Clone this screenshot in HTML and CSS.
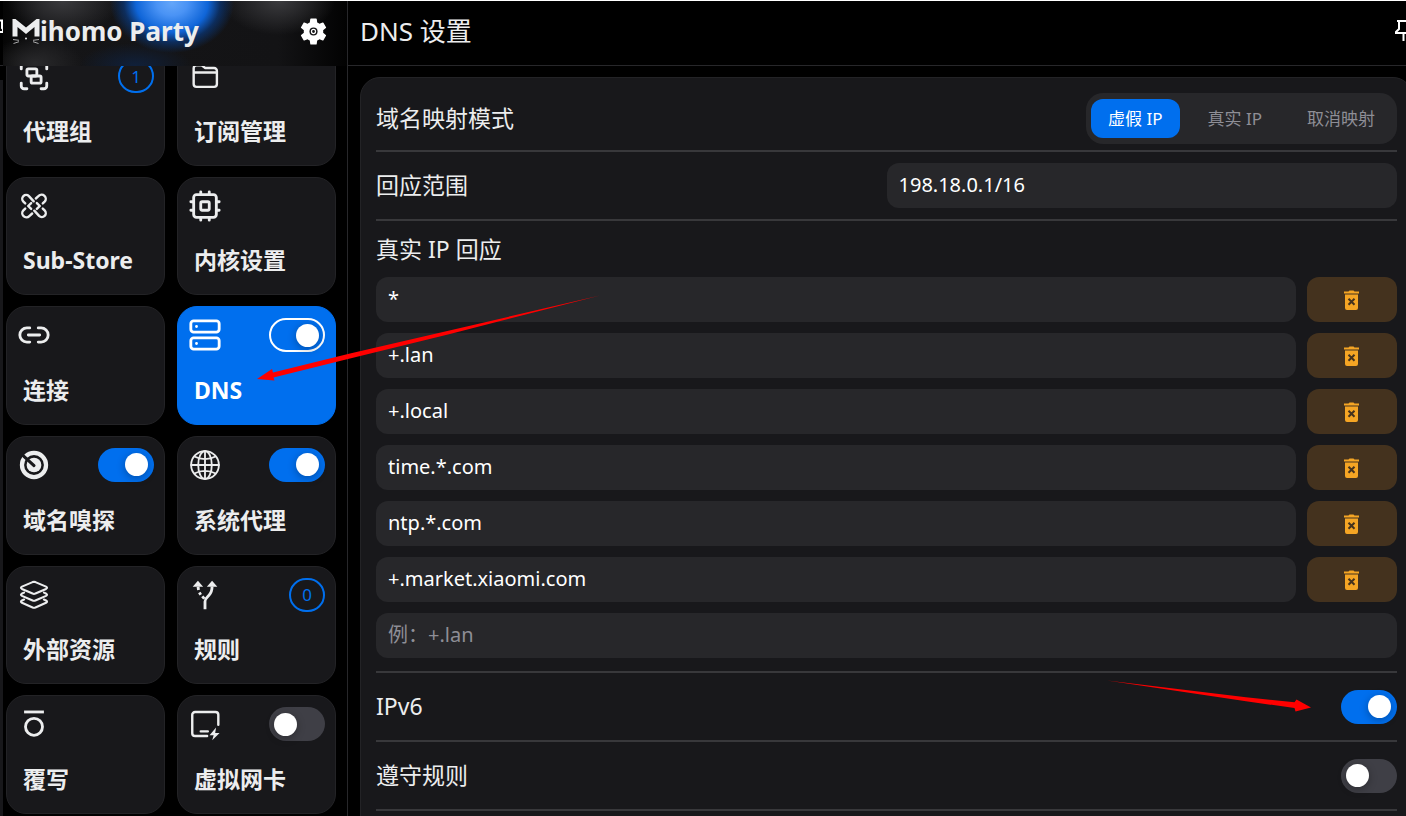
FILE: index.html
```
<!DOCTYPE html>
<html lang="zh-CN">
<head>
<meta charset="utf-8">
<title>Mihomo Party</title>
<link rel="stylesheet" href="styles.css">
</head>
<body>
<div class="app">
  <div class="edge" aria-hidden="true">
    <div class="edge-bar"><svg class="edge-pin" viewBox="0 0 3 15"><path d="M0 1.500h2v7.500l1 1v3H0" fill="none" stroke="currentColor" stroke-width="2"/></svg></div>
    <div class="edge-panel"></div>
  </div>

  <aside class="sidebar">
    <header class="brand">
      <h1 class="brand-name">
        <svg class="logo" viewBox="0 0 28 27" role="img" aria-label="M"><path d="M.5 18.500V1h3L14 9.500 24.500 1h3v17.500h-5V9L14 16 5.500 9v9.500z" fill="currentColor"/><path d="M1 21.500l6 .8M1.500 25.500l5.500-1.800M27 21.500l-6 .8M26.500 25.500L21 23.700" stroke="currentColor" stroke-width="1" opacity=".7"/><circle cx="14" cy="20.500" r="1" fill="currentColor"/></svg>
        <span>ihomo Party</span>
      </h1>
      <button class="icon-button" type="button" aria-label="设置">
        <svg class="gear" viewBox="2 2 20 20"><path fill="currentColor" d="M19.140 12.940c.04-.3.06-.61.06-.94 0-.32-.02-.64-.07-.94l2.030-1.580a.49.49 0 0 0 .12-.61l-1.920-3.320a.488.488 0 0 0-.59-.22l-2.390.96c-.5-.38-1.030-.7-1.620-.94l-.36-2.540a.484.484 0 0 0-.48-.41h-3.840c-.24 0-.43.17-.47.41l-.36 2.540c-.59.24-1.130.57-1.620.94l-2.390-.96c-.22-.08-.47 0-.59.22L2.740 8.870c-.12.21-.08.47.12.61l2.030 1.580c-.05.3-.09.63-.09.94s.02.64.07.94l-2.030 1.580a.49.49 0 0 0-.12.61l1.920 3.320c.12.22.37.29.59.22l2.390-.96c.5.38 1.030.7 1.620.94l.36 2.540c.05.24.24.41.48.41h3.840c.24 0 .44-.17.47-.41l.36-2.540c.59-.24 1.130-.56 1.620-.94l2.390.96c.22.08.47 0 .59-.22l1.920-3.320c.12-.22.07-.47-.12-.61z"/><circle class="gear-hole" cx="12" cy="12" r="3"/><circle cx="12" cy="12" r="1.500" fill="none" stroke="currentColor" stroke-width=".9"/></svg>
      </button>
    </header>

    <nav class="tiles">
      <section class="tile">
        <div class="tile-top"><svg class="icon" viewBox="0 0 24 24"><path d="M3 7V5a2 2 0 0 1 2-2h2M17 3h2a2 2 0 0 1 2 2v2M21 17v2a2 2 0 0 1-2 2h-2M7 21H5a2 2 0 0 1-2-2v-2"/><rect x="7" y="7" width="7" height="5" rx="1"/><rect x="10" y="12" width="7" height="5" rx="1"/></svg><span class="count">1</span></div>
        <a class="tile-name" href="#proxies">代理组</a>
      </section>
      <section class="tile">
        <div class="tile-top"><svg class="icon medium" viewBox="0 0 24 24"><path d="M4 6.500a2 2 0 0 1 2-2h3.600l2.600 1.900h6.200a2 2 0 0 1 2 2v9.300a2 2 0 0 1-2 2H6a2 2 0 0 1-2-2zM4 9.500h16.400"/></svg></div>
        <a class="tile-name" href="#profiles">订阅管理</a>
      </section>
      <section class="tile">
        <div class="tile-top"><svg class="icon medium" viewBox="0 0 24 24"><path d="M11.800 8.700 8.400 5A2.700 2.700 0 0 0 4.500 8.900L5.800 10.200M13.300 6.700 15.300 4.900A2.700 2.700 0 0 1 19.500 8.900L18.200 10.200M12.200 15.300 15.600 19A2.700 2.700 0 0 0 19.500 15.100L18.200 13.800M10.700 17.300 8.700 19.100A2.700 2.700 0 0 1 4.500 15.100L5.800 13.800M10 9.900 7.900 12l2.100 2.100M14 9.900l2.100 2.100-2.100 2.100"/></svg></div>
        <a class="tile-name" href="#substore">Sub-Store</a>
      </section>
      <section class="tile">
        <div class="tile-top"><svg class="icon" viewBox="0 0 24 24"><rect x="4" y="4" width="16" height="16" rx="2"/><rect x="9" y="9" width="6" height="6" rx="1"/><path d="M9 2v2M15 2v2M9 20v2M15 20v2M2 9h2M2 15h2M20 9h2M20 15h2"/></svg></div>
        <a class="tile-name" href="#core">内核设置</a>
      </section>
      <section class="tile">
        <div class="tile-top"><svg class="icon" viewBox="0 0 24 24"><path d="M9 17H7A5 5 0 0 1 7 7h2M15 7h2a5 5 0 0 1 0 10h-2M8 12h8"/></svg></div>
        <a class="tile-name" href="#connections">连接</a>
      </section>
      <section class="tile active">
        <div class="tile-top"><svg class="icon" viewBox="0 0 24 24"><rect x="2" y="2" width="20" height="8" rx="2"/><rect x="2" y="14" width="20" height="8" rx="2"/><path d="M6 6h.01M6 18h.01"/></svg><input class="switch outlined" type="checkbox" role="switch" aria-label="DNS" checked></div>
        <a class="tile-name" href="#dns">DNS</a>
      </section>
      <section class="tile">
        <div class="tile-top"><svg class="icon" viewBox="0 0 24 24"><circle cx="12" cy="12" r="8.500" stroke-width="3"/><circle class="solid" cx="12" cy="12" r="5.200"/><path class="cut" d="M4.500 5.500 12 12.400" stroke-width="2.200"/></svg><input class="switch" type="checkbox" role="switch" aria-label="域名嗅探" checked></div>
        <a class="tile-name" href="#sniffer">域名嗅探</a>
      </section>
      <section class="tile">
        <div class="tile-top"><svg class="icon globe" viewBox="0 0 24 24"><circle cx="12" cy="12" r="9.800"/><ellipse cx="12" cy="12" rx="4.800" ry="9.800"/><path d="M12 2.200v19.600M2.200 12h19.600M4.500 6c4.500 2.400 10.500 2.400 15 0M4.500 18c4.500-2.400 10.500-2.400 15 0"/></svg><input class="switch" type="checkbox" role="switch" aria-label="系统代理" checked></div>
        <a class="tile-name" href="#sysproxy">系统代理</a>
      </section>
      <section class="tile">
        <div class="tile-top"><svg class="icon thin" viewBox="0 0 24 24"><path d="M11 2.900q1-.4 2 0l7.500 3.200q1.400.8 0 1.600L13 11q-1 .4-2 0L3.500 7.700q-1.400-.8 0-1.600zM5 10.300l-1.500.7q-1.400.8 0 1.600L11 15.900q1 .4 2 0l7.500-3.300q1.400-.8 0-1.600l-1.500-.7M5 15.200l-1.500.7q-1.400.8 0 1.600l7.500 3.300q1 .4 2 0l7.500-3.300q1.400-.8 0-1.600l-1.500-.7"/></svg></div>
        <a class="tile-name" href="#resources">外部资源</a>
      </section>
      <section class="tile">
        <div class="tile-top"><svg class="icon" viewBox="0 0 24 24"><path class="solid" d="M7 2l3.700 4.200H3.300zM17 2l3.700 4.200h-7.400z"/><path class="flat" d="M12 22v-5.500c0-1.800 1.200-2.700 2.700-4.200C16.400 10.600 17 9 17 6M7.100 6.200l.3 2.300M8 10.200l1 1.600M10.100 13l1.400 1.600"/></svg><span class="count">0</span></div>
        <a class="tile-name" href="#rules">规则</a>
      </section>
      <section class="tile">
        <div class="tile-top"><svg class="icon" viewBox="0 0 24 24"><path class="flat" d="M5 3.500h14"/><circle cx="12" cy="14" r="6"/></svg></div>
        <a class="tile-name" href="#override">覆写</a>
      </section>
      <section class="tile">
        <div class="tile-top"><svg class="icon medium" viewBox="0 0 24 24"><path d="M13.500 20.500H5a2 2 0 0 1-2-2V5.500a2 2 0 0 1 2-2h14.400a2 2 0 0 1 2 2v7M9 17.200h5"/><path class="solid" d="M19.800 14.500l-4.600 5.500h2.900l-1 3.500 5.200-5.200h-3.100z"/></svg><input class="switch" type="checkbox" role="switch" aria-label="虚拟网卡"></div>
        <a class="tile-name" href="#tun">虚拟网卡</a>
      </section>
    </nav>
  </aside>

  <main class="page">
    <header class="page-head">
      <h2 class="page-title">DNS 设置</h2>
      <button class="icon-button pin" type="button" aria-label="置顶"><svg class="pin-icon" viewBox="0 0 22 22"><path d="M3 1h16M5 1v8l-3 3v1h18v-1l-3-3V1M9.500 13v8" fill="none" stroke="currentColor" stroke-width="2"/></svg></button>
    </header>

    <form class="panel">
      <div class="row">
        <span class="label" id="mode">域名映射模式</span>
        <div class="tabs" role="tablist" aria-labelledby="mode">
          <button class="tab selected" type="button" role="tab" aria-selected="true">虚假 IP</button>
          <button class="tab" type="button" role="tab" aria-selected="false">真实 IP</button>
          <button class="tab" type="button" role="tab" aria-selected="false">取消映射</button>
        </div>
      </div>
      <div class="row">
        <label class="label" for="range">回应范围</label>
        <input class="field half" id="range" type="text" value="198.18.0.1/16">
      </div>
      <div class="group">
        <h3 class="label group-label" id="real">真实 IP 回应</h3>
        <div class="entries">
          <div class="entry"><input class="field" type="text" aria-labelledby="real" value="*"><button class="delete" type="button" aria-label="删除"><svg class="trash" viewBox="0 0 15 20"><use href="#trash"/></svg></button></div>
          <div class="entry"><input class="field" type="text" aria-labelledby="real" value="+.lan"><button class="delete" type="button" aria-label="删除"><svg class="trash" viewBox="0 0 15 20"><use href="#trash"/></svg></button></div>
          <div class="entry"><input class="field" type="text" aria-labelledby="real" value="+.local"><button class="delete" type="button" aria-label="删除"><svg class="trash" viewBox="0 0 15 20"><use href="#trash"/></svg></button></div>
          <div class="entry"><input class="field" type="text" aria-labelledby="real" value="time.*.com"><button class="delete" type="button" aria-label="删除"><svg class="trash" viewBox="0 0 15 20"><use href="#trash"/></svg></button></div>
          <div class="entry"><input class="field" type="text" aria-labelledby="real" value="ntp.*.com"><button class="delete" type="button" aria-label="删除"><svg class="trash" viewBox="0 0 15 20"><use href="#trash"/></svg></button></div>
          <div class="entry"><input class="field" type="text" aria-labelledby="real" value="+.market.xiaomi.com"><button class="delete" type="button" aria-label="删除"><svg class="trash" viewBox="0 0 15 20"><use href="#trash"/></svg></button></div>
          <div class="entry"><input class="field" type="text" aria-labelledby="real" placeholder="例：+.lan"></div>
        </div>
      </div>
      <div class="row">
        <label class="label" for="ipv6">IPv6</label>
        <input class="switch" id="ipv6" type="checkbox" role="switch" checked>
      </div>
      <div class="row">
        <label class="label" for="respect">遵守规则</label>
        <input class="switch" id="respect" type="checkbox" role="switch">
      </div>
      <div class="row"></div>
    </form>
  </main>
</div>

<svg class="defs" aria-hidden="true"><symbol id="trash" viewBox="0 0 15 20"><path fill="currentColor" d="M0 1.500h4.500L5.500.500h4l1 1H15v2H0zM1 4.500h13V18q0 2-2 2H3q-2 0-2-2z"/><path class="trash-x" d="M4.500 8.800l6 6M10.500 8.800l-6 6"/></symbol></svg>

<svg class="arrows" aria-hidden="true">
  <path d="M600 295.500 350 353.500 273 372.500 272 369 257 379 274.500 380.500 273.500 377.500 350 358.500 450 334z"/>
  <path d="M1107 680.500 1246 697.300 1294.500 702.300 1296.500 699.500 1311 707.500 1295.500 711.500 1294.500 708 1246 701.300z"/>
</svg>
</body>
</html>
```
FILE: styles.css
```
* { box-sizing: border-box; }
html, body { height: 100%; }
body {
  margin: 0;
  overflow: hidden;
  background: #000;
  color: #ecedee;
  font-family: "Noto Sans", "Noto Sans CJK SC", sans-serif;
  font-size: 23px;
}
h1, h2, h3 { margin: 0; }
button, input { font: inherit; color: inherit; }
button { border: 0; cursor: pointer; }

.app {
  display: flex;
  height: 100vh;
  border-top: 1px solid #fff;
  overflow: hidden;
}

.edge { flex: none; width: 3px; display: flex; flex-direction: column; }
.edge-bar { height: 65px; padding-top: 18px; border-bottom: 1px solid #27272a; margin-bottom: 14px; }
.edge-pin { display: block; width: 3px; height: 15px; color: #fff; }
.edge-panel { flex: 1; background: #18181b; }

/* Sidebar */
.sidebar {
  flex: none;
  width: 345px;
  display: flex;
  flex-direction: column;
  border-right: 1px solid #27272a;
}
.brand {
  position: relative;
  z-index: 1;
  flex: none;
  height: 65px;
  display: flex;
  align-items: center;
  justify-content: space-between;
  padding: 0 20px 5px 9px;
  background:
    radial-gradient(ellipse 62px 50px at 169px 2px, #64a6f9 0, #4a93f5 25%, #0f65d8 58%, rgba(8, 62, 140, .6) 78%, transparent 100%),
    radial-gradient(ellipse 56px 34px at 60px 0, #3a3a3d, transparent),
    radial-gradient(ellipse 56px 34px at 276px 0, #3a3a3d, transparent),
    radial-gradient(ellipse 48px 26px at 32px 62px, #29292b, transparent),
    radial-gradient(ellipse 56px 22px at 132px 64px, #10203a, transparent),
    linear-gradient(90deg, #050505, #151517 12%, #131315 80%, #020202);
}
.brand-name { display: flex; align-items: center; font-size: 26px; line-height: 36px; font-weight: 700; }
.logo { width: 28px; height: 27px; }
.icon-button { display: flex; padding: 0; background: none; color: #fff; }
.gear { width: 27px; height: 27px; }
.gear-hole { fill: #141416; }

.tiles {
  flex: 1;
  display: grid;
  grid-template-columns: 1fr 1fr;
  grid-template-rows: repeat(6, 1fr);
  gap: 11px 12px;
  margin-top: -19px;
  padding: 0 11px 2px 3px;
}
.tile {
  display: flex;
  flex-direction: column;
  justify-content: space-between;
  padding: 11px 10px 17px;
  border: 1px solid #232326;
  border-radius: 20px;
  background: #18181b;
}
.tile-top { display: flex; align-items: center; justify-content: space-between; height: 34px; }
.tile-name { padding: 0 6px; color: inherit; text-decoration: none; font-weight: 700; line-height: 34px; }
.tile.active { background: #006fee; border-color: #006fee; color: #fff; }

.icon {
  width: 34px;
  height: 34px;
  fill: none;
  stroke: currentColor;
  stroke-width: 2;
  stroke-linecap: round;
  stroke-linejoin: round;
}
.icon.medium { stroke-width: 1.7; }
.icon.thin { stroke-width: 1.5; }
.icon.globe { stroke-width: 1.3; }
.icon .solid { fill: currentColor; stroke: none; }
.icon .cut { stroke: #18181b; }
.icon .flat { stroke-linecap: butt; }

.count {
  display: flex;
  align-items: center;
  justify-content: center;
  width: 36px;
  height: 34px;
  border: 2px solid #006fee;
  border-radius: 18px;
  color: #006fee;
  font-size: 17px;
}

.switch {
  appearance: none;
  flex: none;
  display: flex;
  align-items: center;
  width: 56px;
  height: 34px;
  margin: 0;
  padding: 0 6px 0 5px;
  border-radius: 17px;
  background: #3f3f46;
}
.switch::before {
  content: "";
  width: 23px;
  height: 23px;
  border-radius: 50%;
  background: #fff;
  box-shadow: 0 2px 8px rgba(0, 0, 0, .3);
}
.switch:checked { justify-content: flex-end; background: #006fee; }
.switch.outlined { border: 2px solid #fff; padding: 0 4px; }

/* Page */
.page { flex: 1; min-width: 0; display: flex; flex-direction: column; }
.page-head {
  flex: none;
  height: 65px;
  display: flex;
  align-items: center;
  justify-content: space-between;
  padding: 0 0 5px 12px;
  border-bottom: 1px solid #27272a;
}
.page-title { font-size: 26px; line-height: 36px; font-weight: 400; }
.pin { margin-right: -10px; }
.pin-icon { width: 22px; height: 22px; }

.panel {
  flex: 1 0 auto;
  margin: 11px -7px -20px 12px;
  padding: 12px 15px;
  border: 1px solid #232326;
  border-radius: 20px;
  background: #18181b;
}
.row {
  display: flex;
  align-items: center;
  justify-content: space-between;
  height: 69px;
  border-bottom: 2px solid #38383b;
}
.row:first-child { height: 62px; padding-bottom: 3px; }
.row:last-child { border: 0; }
.label { padding-bottom: 2px; font-size: 23px; line-height: 32px; font-weight: 400; }
.group { padding: 12px 0 12px; border-bottom: 2px solid #38383b; }
.group-label { margin-bottom: 10px; }
.entries { display: flex; flex-direction: column; gap: 11px; padding-bottom: 1px; }
.entry { display: flex; gap: 11px; }
.field {
  flex: 1;
  min-width: 0;
  height: 45px;
  padding: 0 12px 2px;
  border: 0;
  border-radius: 12px;
  outline: 0;
  background: #27272a;
  color: #fff;
  font-size: 20px;
}
.field::placeholder { color: #8e8e96; opacity: 1; }
.field.half { flex: 0 0 50%; }
.delete {
  flex: none;
  display: flex;
  align-items: center;
  justify-content: center;
  width: 90px;
  height: 45px;
  padding: 0 1px 0 0;
  border-radius: 12px;
  background: #44321e;
  color: #f5a524;
}
.trash { width: 15px; height: 20px; }
.trash-x { stroke: #44321e; stroke-width: 2; }

.tabs { display: flex; gap: 11px; padding: 6px 5px; border-radius: 17px; background: #27272a; }
.tab {
  height: 39px;
  padding: 0 17px 2px;
  border-radius: 12px;
  background: none;
  color: #8e8e96;
  font-size: 17px;
}
.tab.selected { background: #006fee; color: #fff; }

.defs { position: absolute; width: 0; height: 0; }
.arrows { position: absolute; inset: 0; width: 100%; height: 100%; fill: #f00; pointer-events: none; }
```
